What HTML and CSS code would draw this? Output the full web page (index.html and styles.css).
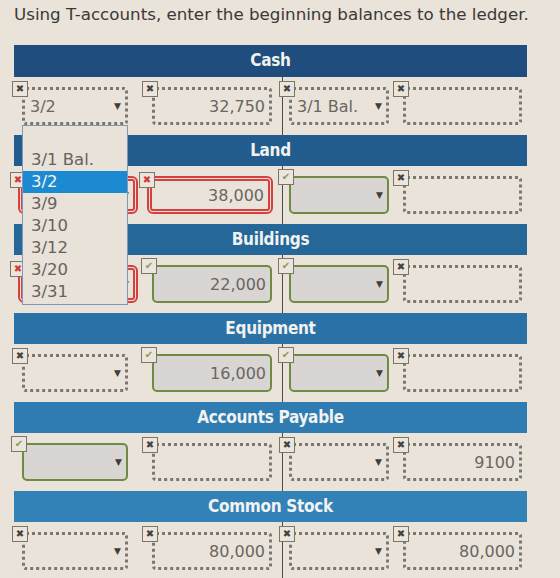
FILE: index.html
```html
<!DOCTYPE html>
<html lang="en">

<head>
    <meta charset="UTF-8">
    <meta name="viewport" content="width=device-width, initial-scale=1.0">
    <title>Ledger</title>
    <link rel="stylesheet" href="styles.css">
</head>

<body>
    <p class="prompt">Using T-accounts, enter the beginning balances to the ledger.</p>

    <div class="ledger">

        <!-- Cash -->
        <section class="account">
            <h2 class="account-head">Cash</h2>
            <div class="t-row">
                <div class="cell c1"><div class="field dotted pick"><span class="mark">&#x2716;</span><span class="val">3/2</span><span class="arrow">&#9660;</span></div></div>
                <div class="cell c2"><div class="field dotted amount"><span class="mark">&#x2716;</span><span class="val">32,750</span></div></div>
                <div class="cell c3"><div class="field dotted pick"><span class="mark">&#x2716;</span><span class="val">3/1 Bal.</span><span class="arrow">&#9660;</span></div></div>
                <div class="cell c4"><div class="field dotted amount"><span class="mark">&#x2716;</span><span class="val"></span></div></div>
            </div>
        </section>

        <!-- Land -->
        <section class="account">
            <h2 class="account-head">Land</h2>
            <div class="t-row">
                <div class="cell c1"><div class="field wrong pick"><span class="mark bad">&#x2716;</span><span class="val"></span><span class="arrow">&#9660;</span></div></div>
                <div class="cell c2"><div class="field wrong amount"><span class="mark bad">&#x2716;</span><span class="val">38,000</span></div></div>
                <div class="cell c3"><div class="field right pick"><span class="mark ok">&#x2714;</span><span class="val"></span><span class="arrow">&#9660;</span></div></div>
                <div class="cell c4"><div class="field dotted amount"><span class="mark">&#x2716;</span><span class="val"></span></div></div>
            </div>
        </section>

        <!-- Buildings -->
        <section class="account">
            <h2 class="account-head">Buildings</h2>
            <div class="t-row">
                <div class="cell c1"><div class="field wrong pick"><span class="mark bad">&#x2716;</span><span class="val"></span><span class="arrow">&#9660;</span></div></div>
                <div class="cell c2"><div class="field right amount"><span class="mark ok">&#x2714;</span><span class="val">22,000</span></div></div>
                <div class="cell c3"><div class="field right pick"><span class="mark ok">&#x2714;</span><span class="val"></span><span class="arrow">&#9660;</span></div></div>
                <div class="cell c4"><div class="field dotted amount"><span class="mark">&#x2716;</span><span class="val"></span></div></div>
            </div>
        </section>

        <!-- Equipment -->
        <section class="account">
            <h2 class="account-head">Equipment</h2>
            <div class="t-row">
                <div class="cell c1"><div class="field dotted pick"><span class="mark">&#x2716;</span><span class="val"></span><span class="arrow">&#9660;</span></div></div>
                <div class="cell c2"><div class="field right amount"><span class="mark ok">&#x2714;</span><span class="val">16,000</span></div></div>
                <div class="cell c3"><div class="field right pick"><span class="mark ok">&#x2714;</span><span class="val"></span><span class="arrow">&#9660;</span></div></div>
                <div class="cell c4"><div class="field dotted amount"><span class="mark">&#x2716;</span><span class="val"></span></div></div>
            </div>
        </section>

        <!-- Accounts Payable -->
        <section class="account">
            <h2 class="account-head">Accounts Payable</h2>
            <div class="t-row">
                <div class="cell c1"><div class="field right pick"><span class="mark ok">&#x2714;</span><span class="val"></span><span class="arrow">&#9660;</span></div></div>
                <div class="cell c2"><div class="field dotted amount"><span class="mark">&#x2716;</span><span class="val"></span></div></div>
                <div class="cell c3"><div class="field dotted pick"><span class="mark">&#x2716;</span><span class="val"></span><span class="arrow">&#9660;</span></div></div>
                <div class="cell c4"><div class="field dotted amount"><span class="mark">&#x2716;</span><span class="val">9100</span></div></div>
            </div>
        </section>

        <!-- Common Stock -->
        <section class="account">
            <h2 class="account-head">Common Stock</h2>
            <div class="t-row">
                <div class="cell c1"><div class="field dotted pick"><span class="mark">&#x2716;</span><span class="val"></span><span class="arrow">&#9660;</span></div></div>
                <div class="cell c2"><div class="field dotted amount"><span class="mark">&#x2716;</span><span class="val">80,000</span></div></div>
                <div class="cell c3"><div class="field dotted pick"><span class="mark">&#x2716;</span><span class="val"></span><span class="arrow">&#9660;</span></div></div>
                <div class="cell c4"><div class="field dotted amount"><span class="mark">&#x2716;</span><span class="val">80,000</span></div></div>
            </div>
        </section>

        <!-- open date list of the first Cash select -->
        <ul class="options">
            <li>3/1 Bal.</li>
            <li class="active">3/2</li>
            <li>3/9</li>
            <li>3/10</li>
            <li>3/12</li>
            <li>3/20</li>
            <li>3/31</li>
        </ul>
    </div>
</body>

</html>
```

FILE: styles.css
```css
body {
    margin: 0;
    background-color: #e9e3d9;
    font-family: "DejaVu Sans", Verdana, sans-serif;
    color: #555;
}

.prompt {
    margin: 0;
    padding: 4px 0 0 14px;
    height: 40px;
    box-sizing: border-box;
    font-size: 16.7px;
    color: #3b3835;
}

.ledger {
    position: relative;
    margin: 5px 0 0 14px;
    width: 513px;
}

.account-head {
    margin: 0;
    height: 31px;
    line-height: 30px;
    text-align: center;
    font-size: 17px;
    font-weight: bold;
    font-stretch: condensed;
    letter-spacing: -0.3px;
    color: #f2f2f0;
    background-color: #2b74a8;
}

.account:nth-child(1) .account-head { background-color: #1f4d7d; height: 32px; line-height: 31px; }
.account:nth-child(2) .account-head { background-color: #225c8e; }
.account:nth-child(3) .account-head { background-color: #256799; }
.account:nth-child(4) .account-head { background-color: #2a72a6; }
.account:nth-child(5) .account-head { background-color: #2e7cb1; }
.account:nth-child(6) .account-head { background-color: #3282b8; }

.t-row {
    display: grid;
    grid-template-columns: 126px 142px 112px 133px;
    height: 58px;
}

.cell {
    padding-top: 10px;
    box-sizing: border-box;
}

.c1 { padding-left: 8px; }
.c2 { padding-left: 12px; }
.c3 { padding-left: 6px; border-left: 1px solid #4d4b48; }
.c4 { padding-left: 9px; }

.field {
    position: relative;
    display: flex;
    align-items: center;
    height: 38px;
    box-sizing: border-box;
    padding: 0 4px 0 5px;
    font-size: 16px;
    color: #6a6662;
    border-radius: 4px;
}

.c1 .field { width: 106px; }
.c2 .field { width: 120px; }
.c3 .field { width: 100px; }
.c4 .field { width: 119px; }

.dotted {
    border: 3px dotted #7a7672;
}

.wrong {
    border: 5px double #d6413f;
    border-radius: 6px;
}

.c1 .wrong { width: 120px; margin-left: -4px; }
.c2 .wrong { width: 126px; margin-left: -5px; }

.right {
    border: 2px solid #6f8a43;
    border-radius: 5px;
    background-color: #d9d5d2;
}

.val {
    flex: 1;
    white-space: nowrap;
}

.amount .val {
    text-align: right;
}

.arrow {
    font-size: 9px;
    color: #3f3d3b;
}

/* little status box sitting on the field corner */
.mark {
    position: absolute;
    left: -13px;
    top: -9px;
    width: 16px;
    height: 16px;
    box-sizing: border-box;
    border: 1px solid #7b7468;
    background-color: #ebe5db;
    font-size: 10px;
    line-height: 14px;
    text-align: center;
    color: #454240;
}

.mark.bad { color: #d23a3a; }
.mark.ok { color: #8a9a5e; }

.options {
    position: absolute;
    left: 8px;
    top: 80px;
    width: 106px;
    height: 180px;
    box-sizing: border-box;
    margin: 0;
    padding: 23px 0 0;
    list-style: none;
    border: 1px solid #7f98b5;
    background-color: #e8e2d8;
    font-size: 16.5px;
    color: #66625e;
}

.options li {
    height: 22px;
    line-height: 22px;
    padding-left: 8px;
}

.options .active {
    background-color: #1c8ad0;
    color: #f4f4f4;
}
```
